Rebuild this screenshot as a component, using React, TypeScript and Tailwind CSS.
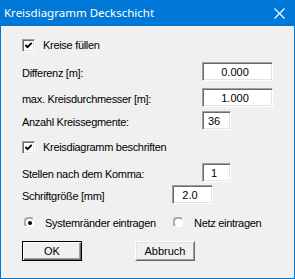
import React from "react";

const font = { fontFamily: '"Liberation Sans", Arial, sans-serif' };

function Check({ checked }: { checked: boolean }) {
  return (
    <div className="w-[13px] h-[13px] bg-white border border-t-[#a0a0a0] border-l-[#a0a0a0] border-b-white border-r-white shadow-[inset_1px_1px_0_#696969,inset_-1px_-1px_0_#e3e3e3] flex items-center justify-center shrink-0">
      {checked && (
        <svg width="9" height="9" viewBox="0 0 9 9">
          <path d="M1.5 4 L3.5 6.2 L7.7 1.8" fill="none" stroke="#000" strokeWidth="1.9" />
        </svg>
      )}
    </div>
  );
}

function Radio({ checked }: { checked: boolean }) {
  return (
    <svg width="12" height="12" viewBox="0 0 12 12" className="shrink-0">
      <circle cx="6" cy="6" r="5.5" fill="#fff" />
      <path d="M1.2 9 A5.5 5.5 0 0 1 9 1.2" fill="none" stroke="#a0a0a0" strokeWidth="1" />
      <path d="M2.2 8.6 A4.5 4.5 0 0 1 8.6 2.2" fill="none" stroke="#696969" strokeWidth="1" />
      <path d="M10.8 3 A5.5 5.5 0 0 1 3 10.8" fill="none" stroke="#f0f0f0" strokeWidth="1" />
      <path d="M9.8 3.4 A4.5 4.5 0 0 1 3.4 9.8" fill="none" stroke="#e3e3e3" strokeWidth="1" />
      {checked && <circle cx="6" cy="6" r="2" fill="#000" />}
    </svg>
  );
}

function Field({ value, w }: { value: string; w: string }) {
  return (
    <div
      className={`${w} h-[19px] bg-white border border-t-[#a0a0a0] border-l-[#a0a0a0] border-b-white border-r-white shadow-[inset_1px_1px_0_#696969,inset_-1px_-1px_0_#e3e3e3] flex items-center justify-center pr-[5px] pt-[1px] text-[11px] text-black shrink-0`}
    >
      {value}
    </div>
  );
}

function Label({ children }: { children: React.ReactNode }) {
  return <span className="text-[11px] tracking-[-0.3px] text-black leading-none">{children}</span>;
}

export default function App() {
  return (
    <div style={font} className="w-[295px] h-[279px] flex flex-col bg-[#f0f0f0]">
      <div className="h-[26px] bg-[#0078d7] flex items-center justify-between pl-[4px] pr-[10px] shrink-0">
        <span
          className="text-white text-[11.5px] leading-none"
          style={{ fontFamily: '"Noto Sans", "Open Sans", sans-serif' }}
        >
          Kreisdiagramm Deckschicht
        </span>
        <svg width="11" height="11" viewBox="0 0 11 11">
          <path d="M0.5 0.5 L10.5 10.5 M10.5 0.5 L0.5 10.5" stroke="#fff" strokeWidth="1.1" />
        </svg>
      </div>
      <div className="flex-1 border-x border-b border-[#0078d7] bg-[#f0f0f0] pl-[21px] flex flex-col">
        <div className="mt-[13px] h-[13px] flex items-center gap-[8px]">
          <Check checked />
          <Label>Kreise füllen</Label>
        </div>
        <div className="mt-[10px] h-[19px] flex items-center">
          <div className="w-[180px]"><Label>Differenz [m]:</Label></div>
          <Field value="0.000" w="w-[71px]" />
        </div>
        <div className="mt-[7px] h-[19px] flex items-center">
          <div className="w-[180px]"><Label>max. Kreisdurchmesser [m]:</Label></div>
          <Field value="1.000" w="w-[71px]" />
        </div>
        <div className="mt-[4px] h-[19px] flex items-center">
          <div className="w-[180px]"><Label>Anzahl Kreissegmente:</Label></div>
          <Field value="36" w="w-[29px]" />
        </div>
        <div className="mt-[11px] h-[13px] flex items-center gap-[8px]">
          <Check checked />
          <Label>Kreisdiagramm beschriften</Label>
        </div>
        <div className="mt-[9px] h-[19px] flex items-center">
          <div className="w-[180px]"><Label>Stellen nach dem Komma:</Label></div>
          <Field value="1" w="w-[29px]" />
        </div>
        <div className="mt-[3px] h-[19px] flex items-center">
          <div className="w-[150px]"><Label>Schriftgröße [mm]</Label></div>
          <Field value="2.0" w="w-[41px]" />
        </div>
        <div className="mt-[13px] h-[12px] flex items-center">
          <div className="w-[151px] flex items-center gap-[9px] pl-[2px]">
            <Radio checked />
            <Label>Systemränder eintragen</Label>
          </div>
          <div className="flex items-center gap-[9px]">
            <Radio checked={false} />
            <Label>Netz eintragen</Label>
          </div>
        </div>
        <div className="mt-[12px] flex items-center">
          <button className="w-[60px] h-[20px] bg-[#f0f0f0] border border-black shadow-[inset_1px_1px_0_#fff,inset_-1px_-1px_0_#696969,inset_-2px_-2px_0_#a0a0a0] text-[11px] text-black flex items-center justify-center">
            OK
          </button>
          <button className="ml-[53px] w-[60px] h-[20px] bg-[#f0f0f0] border border-t-white border-l-white border-b-[#696969] border-r-[#696969] shadow-[inset_1px_1px_0_#e3e3e3,inset_-1px_-1px_0_#a0a0a0] text-[11px] text-black flex items-center justify-center">
            Abbruch
          </button>
        </div>
      </div>
    </div>
  );
}
